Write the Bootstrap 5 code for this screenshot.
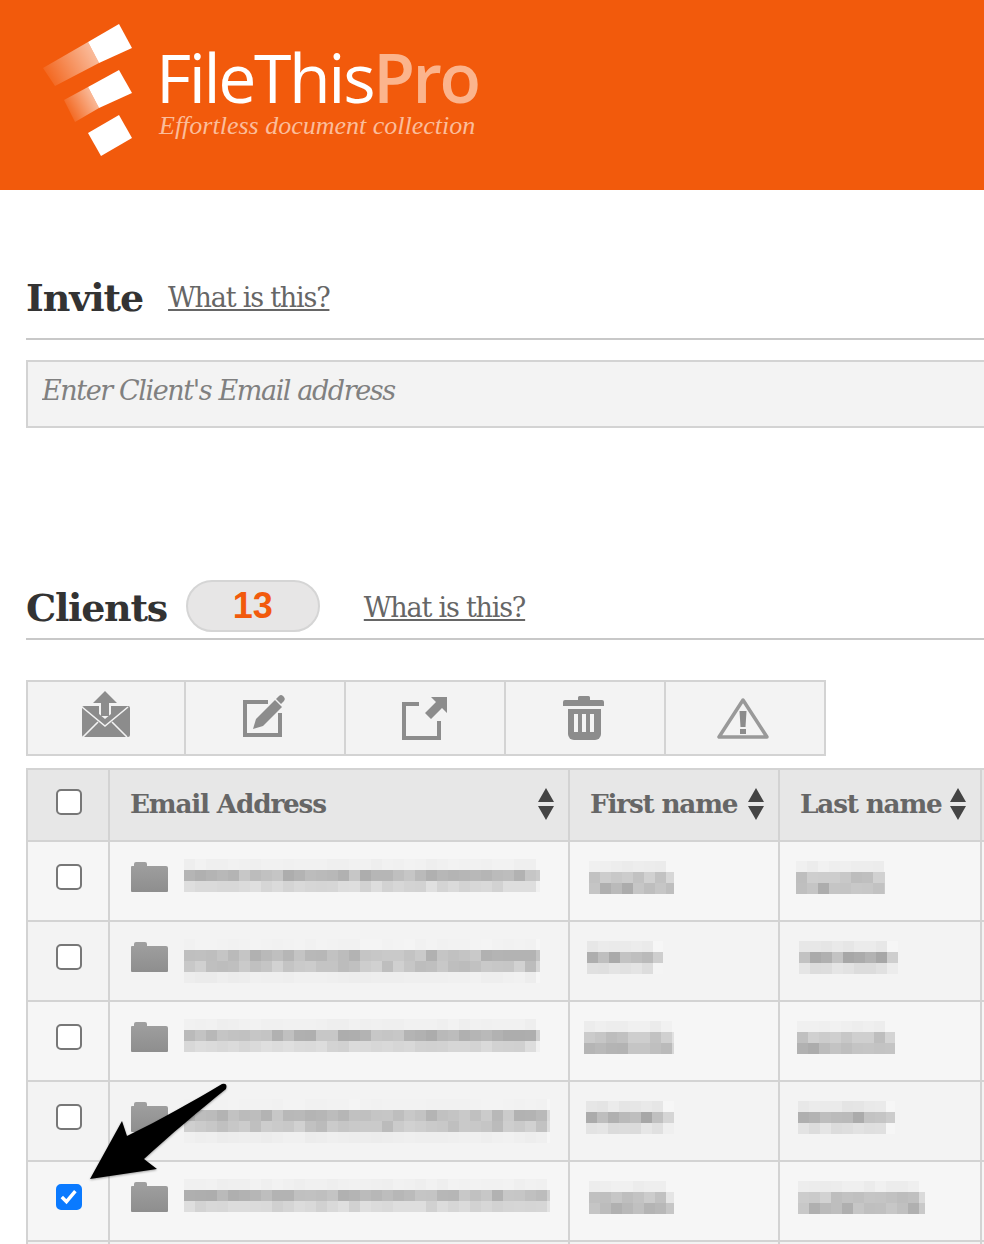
<!DOCTYPE html>
<html lang="en">
<head>
    <meta charset="UTF-8">
    <meta name="viewport" content="width=device-width, initial-scale=1.0">
    <title>FileThis Pro - Clients</title>
    <link href="https://cdn.jsdelivr.net/npm/bootstrap@5.3.0/dist/css/bootstrap.min.css" rel="stylesheet">
    <style>
        html, body {
            height: 1244px;
            overflow: hidden;
            background-color: #fff;
        }
        body {
            font-family: "DejaVu Serif", "Liberation Serif", serif;
            color: #333;
        }
        .brand-bar {
            background-color: #f25a0c;
            height: 190px;
            padding: 20px 0 0 40px;
            gap: 20px;
        }
        .brand-name {
            font-family: "Open Sans", sans-serif;
            font-weight: 400;
            font-size: 68px;
            line-height: 62px;
            letter-spacing: -2.4px;
            color: #fff;
            margin-top: 26px;
        }
        .brand-name span { color: #fbb48d; font-weight: 600; }
        .brand-tag {
            font-family: "Liberation Serif", serif;
            font-style: italic;
            font-size: 26px;
            line-height: 24px;
            color: #fbbd9b;
            margin: 6px 0 0 3px;
            white-space: nowrap;
        }
        .page-body { padding-left: 26px; }
        .section-head {
            border-bottom: 2px solid #c8c8c8;
            white-space: nowrap;
        }
        .invite-head { margin-top: 78px; height: 72px; padding-bottom: 10px; gap: 25px; }
        .clients-head { margin-top: 150px; height: 62px; gap: 19px; }
        .section-title {
            font-size: 38px;
            font-weight: 700;
            letter-spacing: -1.1px;
            line-height: 44px;
            margin: 0;
            color: #333;
        }
        .clients-head .section-title { letter-spacing: -1.3px; }
        .help-link {
            font-size: 27px;
            letter-spacing: -1.2px;
            color: #666;
        }
        .help-link:hover { color: #666; }
        .count-pill {
            width: 134px;
            height: 52px;
            background-color: #e7e6e6;
            border: 2px solid #d5d5d5;
            border-radius: 26px;
            font-family: "Liberation Sans", sans-serif;
            font-weight: 700;
            font-size: 36px;
            color: #f25a0c;
            margin-right: 25px;
            align-self: flex-end;
            margin-bottom: 6px;
        }
        .invite-input.form-control {
            width: 1000px;
            height: 68px;
            margin-top: 20px;
            background-color: #f3f3f3;
            border: 2px solid #d3d3d3;
            border-radius: 0;
            padding: 0 14px 8px;
            font-size: 27px;
            letter-spacing: -1.4px;
            font-style: italic;
        }
        .invite-input::placeholder { color: #808080; opacity: 1; }
        .tool-strip {
            width: 800px;
            height: 76px;
            margin-top: 40px;
            background-color: #f3f3f3;
            border: 2px solid #d3d3d3;
        }
        .tool-cell {
            width: 160px;
            border-right: 2px solid #d3d3d3;
        }
        .tool-cell:first-child { width: 158px; }
        .tool-cell:last-child { width: 158px; border-right: 0; }
        .tool-cell svg { filter: blur(.5px); }
        .client-table.table {
            --bs-table-border-color: #d3d3d3;
            --bs-border-width: 2px;
            width: 1100px;
            margin: 12px 0 0 0;
            table-layout: fixed;
        }
        .c-check { width: 82px; }
        .c-email { width: 460px; }
        .c-first { width: 210px; }
        .c-last { width: 202px; }
        .client-table > thead > tr > th {
            height: 72px;
            padding: 0 14px 2px 20px;
            background-color: #e7e7e7;
            color: #666;
            font-size: 26.300px;
            font-weight: 700;
            letter-spacing: -1.200px;
            vertical-align: middle;
            white-space: nowrap;
        }
        .client-table > tbody > tr > td {
            height: 80px;
            padding: 0;
            vertical-align: top;
        }
        .client-table > tbody > tr:nth-child(odd) > td { background-color: #f6f6f6; }
        .client-table > tbody > tr:nth-child(even) > td { background-color: #f3f3f3; }
        .check-slot { padding: 22px 0 0 2px; }
        .client-table > thead > tr > th.check-head { padding: 0 0 0 2px; }
        .client-check.form-check-input {
            width: 26px;
            height: 26px;
            margin: 0;
            background-color: #fff;
            border: 2px solid #777;
            border-radius: 5px;
        }
        .check-head .client-check.form-check-input { margin-top: 4px; }
        .client-check.form-check-input:checked {
            background-color: #0a7aff;
            border-color: #0a7aff;
            background-image: url("data:image/svg+xml,%3csvg xmlns='http://www.w3.org/2000/svg' viewBox='0 0 26 26'%3e%3cpath fill='none' stroke='%23fff' stroke-width='4' d='M4.500 13l5.500 5.500L20.500 6'/%3e%3c/svg%3e");
        }
        .email-slot { padding: 20px 0 0 20px; gap: 16px; }
        .email-slot .blur-strip { margin-top: -3px; }
        .name-slot { display: block; padding-top: 19px; }
        .blur-strip { display: block; overflow: visible; filter: blur(.6px); }
        .sort-mark { flex: none; filter: blur(.4px); }
        .pointer-arrow {
            position: absolute;
            left: 0;
            top: 0;
            pointer-events: none;
        }
    </style>
</head>
<body class="position-relative">
    <!-- Header -->
    <header class="brand-bar d-flex">
        <svg width="96" height="136" viewBox="40 20 96 136" class="flex-none">
            <defs>
                <linearGradient id="fadeTop" gradientUnits="userSpaceOnUse" x1="48" y1="78" x2="100" y2="50">
                    <stop offset="0" stop-color="#fff" stop-opacity=".08"/>
                    <stop offset="1" stop-color="#fff" stop-opacity=".65"/>
                </linearGradient>
                <linearGradient id="fadeMid" gradientUnits="userSpaceOnUse" x1="68" y1="112" x2="98" y2="96">
                    <stop offset="0" stop-color="#fff" stop-opacity=".08"/>
                    <stop offset="1" stop-color="#fff" stop-opacity=".65"/>
                </linearGradient>
            </defs>
            <polygon points="43,68 88,42 99,63 55,86" fill="url(#fadeTop)"/>
            <polygon points="88,42 119,24 132,48 99,63" fill="#fff"/>
            <polygon points="64,100 88,87 99,108 75,122" fill="url(#fadeMid)"/>
            <polygon points="88,87 119,70 132,93 99,108" fill="#fff"/>
            <polygon points="88,133 119,115 132,138 101,156" fill="#fff"/>
        </svg>
        <div>
            <div class="brand-name">FileThis<span>Pro</span></div>
            <div class="brand-tag">Effortless document collection</div>
        </div>
    </header>

    <div class="page-body">
        <!-- Invite -->
        <div class="section-head invite-head d-flex align-items-center">
            <h2 class="section-title">Invite</h2>
            <a href="#" class="help-link">What is this?</a>
        </div>
        <input type="text" class="invite-input form-control" placeholder="Enter Client's Email address">

        <!-- Clients -->
        <div class="section-head clients-head d-flex align-items-center">
            <h2 class="section-title">Clients</h2>
            <div class="count-pill d-flex align-items-center justify-content-center">13</div>
            <a href="#" class="help-link">What is this?</a>
        </div>

        <!-- Toolbar -->
        <div class="tool-strip d-flex">
            <div class="tool-cell d-flex align-items-center justify-content-center">
                <svg width="60" height="60" viewBox="0 0 60 60">
                    <path d="M8 18h44a2 2 0 0 1 2 2v27a2 2 0 0 1-2 2H8a2 2 0 0 1-2-2V20a2 2 0 0 1 2-2z" fill="#8c8c8c"/>
                    <path d="M6 19l23 19 23-19M7 49l15-15M51 49L36 34" fill="none" stroke="#f3f3f3" stroke-width="1.600"/>
                    <path d="M23 17v9l6 5 6-5v-9" fill="#f3f3f3"/>
                    <path d="M29 3l12 12h-8v13h-8V15h-8z" fill="#8c8c8c"/>
                </svg>
            </div>
            <div class="tool-cell d-flex align-items-center justify-content-center">
                <svg width="60" height="60" viewBox="0 0 60 60">
                    <path d="M33 14H10v33h35V25" fill="none" stroke="#8c8c8c" stroke-width="4"/>
                    <path d="M18 41l3-10 19-19 7 7-19 19z" fill="#8c8c8c"/>
                    <path d="M41 11l3-3a3 3 0 0 1 4 0l1 1a3 3 0 0 1 0 4l-3 3z" fill="#8c8c8c"/>
                </svg>
            </div>
            <div class="tool-cell d-flex align-items-center justify-content-center">
                <svg width="60" height="60" viewBox="0 0 60 60">
                    <path d="M24 16H9v34h35V33" fill="none" stroke="#8c8c8c" stroke-width="4"/>
                    <path d="M52 9v16l-5-5-11 11-6-6 11-11-5-5z" fill="#8c8c8c"/>
                </svg>
            </div>
            <div class="tool-cell d-flex align-items-center justify-content-center">
                <svg width="60" height="60" viewBox="0 0 60 60">
                    <path d="M23 12V9.500a1.500 1.500 0 0 1 1.500-1.500h9a1.500 1.500 0 0 1 1.500 1.500V12h12a2 2 0 0 1 2 2v4H8v-4a2 2 0 0 1 2-2z" fill="#8c8c8c"/>
                    <path d="M13 21h33v25a6 6 0 0 1-6 6H19a6 6 0 0 1-6-6z" fill="#8c8c8c"/>
                    <path d="M19 26h4v18h-4zM27 26h4v18h-4zM35 26h4v18h-4z" fill="#f3f3f3"/>
                </svg>
            </div>
            <div class="tool-cell d-flex align-items-center justify-content-center">
                <svg width="60" height="60" viewBox="0 0 60 60">
                    <path d="M28 12L4 49h48z" fill="none" stroke="#999" stroke-width="3.500" stroke-linejoin="round"/>
                    <path d="M24.500 23h7l-1 16h-5z" fill="#8c8c8c"/>
                    <rect x="25" y="41" width="6" height="5" fill="#8c8c8c"/>
                </svg>
            </div>
        </div>

        <!-- Client table -->
        <table class="client-table table table-bordered">
            <colgroup>
                <col class="c-check"><col class="c-email"><col class="c-first"><col class="c-last"><col>
            </colgroup>
            <thead>
                <tr>
                    <th class="check-head text-center"><input class="client-check form-check-input" type="checkbox" aria-label="Select all"></th>
                    <th><div class="d-flex align-items-center justify-content-between">Email Address <svg class="sort-mark" width="16" height="32" viewBox="0 0 16 32"><path d="M8 0l8 14H0zM0 18h16L8 32z" fill="#444"/></svg></div></th>
                    <th><div class="d-flex align-items-center justify-content-between">First name <svg class="sort-mark" width="16" height="32" viewBox="0 0 16 32"><path d="M8 0l8 14H0zM0 18h16L8 32z" fill="#444"/></svg></div></th>
                    <th><div class="d-flex align-items-center justify-content-between">Last name <svg class="sort-mark" width="16" height="32" viewBox="0 0 16 32"><path d="M8 0l8 14H0zM0 18h16L8 32z" fill="#444"/></svg></div></th>
                    <th></th>
                </tr>
            </thead>
            <tbody id="clientRows"></tbody>
        </table>
    </div>

    <!-- Arrow pointing at the ticked row -->
    <svg class="pointer-arrow" width="984" height="1244" viewBox="0 0 984 1244">
        <defs>
            <filter id="arrowShadow" x="-10%" y="-10%" width="120%" height="120%">
                <feDropShadow dx="0" dy="1" stdDeviation="1" flood-color="#000" flood-opacity=".35"/>
            </filter>
        </defs>
        <path d="M90 1179L122 1121 127 1136C160 1120 195 1100 222 1084Q228 1083 226 1089C200 1110 170 1135 144 1159L157 1169z" fill="#000" filter="url(#arrowShadow)"/>
    </svg>

    <script>
        // Redacted cell data: where each smudge starts, and how wide it is
        const clientRows = [
            { emailW: 356, first: [5, 85], last: [16, 89], tone: 0 },
            { emailW: 356, first: [3, 76], last: [19, 99], tone: 1 },
            { emailW: 356, first: [0, 90], last: [17, 98], tone: 0 },
            { emailW: 366, first: [2, 88], last: [18, 97], tone: 1 },
            { emailW: 366, first: [5, 85], last: [18, 127], tone: 0 },
            { emailW: 356, first: [5, 85], last: [18, 100], tone: 1 }
        ];

        // Small seeded random so the mosaic is the same on every run
        let seed = 7;
        function nextRandom() {
            seed = (seed * 16807) % 2147483647;
            return seed / 2147483647;
        }

        function gray(level) {
            const v = Math.round(level);
            return `rgb(${v},${v},${v})`;
        }

        // Draw a pixelated strip like the blurred-out text in the screenshot
        function mosaic(dx, width, levels) {
            const cell = 11;
            const rects = [];
            levels.forEach((base, rowIndex) => {
                for (let x = 0; x < width; x += cell) {
                    const edge = x + cell >= width ? 18 : 0;
                    const level = base + edge + (nextRandom() - 0.5) * (250 - base) * 0.45;
                    rects.push(`<rect x="${dx + x}" y="${rowIndex * 11}" width="${Math.min(cell, width - x)}" height="11" fill="${gray(Math.min(level, 246))}"/>`);
                }
            });
            return `<svg class="blur-strip" width="${dx + width}" height="${levels.length * 11}">${rects.join('')}</svg>`;
        }

        const folderIcon = `
            <svg width="38" height="30" viewBox="0 0 38 30" class="flex-none">
                <defs><linearGradient id="folderFill" x1="0" y1="0" x2="0" y2="1"><stop offset="0" stop-color="#a0a0a0"/><stop offset="1" stop-color="#8e8e8e"/></linearGradient></defs>
                <path d="M1 5q0-1 1-1h2V2q0-2 2-2h9q2 0 2 2v2h19q2 0 2 2v23q0 1-1 1H2q-1 0-1-1z" fill="url(#folderFill)"/>
            </svg>`;

        function renderRows() {
            const body = document.getElementById('clientRows');
            clientRows.forEach((row, i) => {
                const emailLevels = row.tone ? [242, 190, 198, 238] : [240, 186, 216];
                const nameLevels = row.tone ? [232, 182, 224] : [238, 200, 186];
                const tr = document.createElement('tr');
                tr.innerHTML = `
                    <td class="text-center"><div class="check-slot"><input class="client-check form-check-input" type="checkbox" aria-label="Select row" ${i === 4 ? 'checked' : ''}></div></td>
                    <td><div class="email-slot d-flex">${folderIcon}${mosaic(0, row.emailW, emailLevels)}</div></td>
                    <td><div class="name-slot">${mosaic(14 + row.first[0], row.first[1], nameLevels)}</div></td>
                    <td><div class="name-slot">${mosaic(row.last[0], row.last[1], nameLevels)}</div></td>
                    <td></td>`;
                body.appendChild(tr);
            });
        }

        renderRows();
    </script>
    <script src="https://cdn.jsdelivr.net/npm/bootstrap@5.3.0/dist/js/bootstrap.bundle.min.js"></script>
</body>
</html>
